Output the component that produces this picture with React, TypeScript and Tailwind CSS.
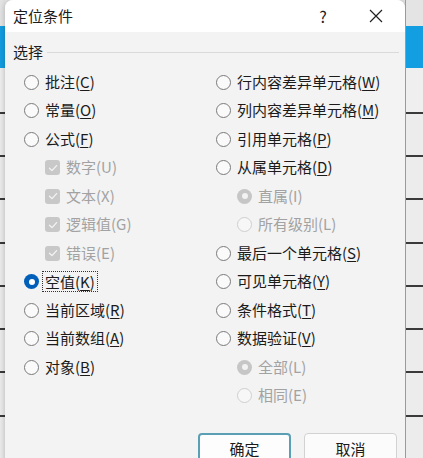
import React from 'react';

const font = { fontFamily: '"Noto Sans CJK SC", "Noto Sans", sans-serif' };

type Item = {
  label: string;
  key?: string;
  kind: 'radio' | 'check';
  checked?: boolean;
  disabled?: boolean;
  indent?: boolean;
  focus?: boolean;
};

const leftItems: Item[] = [
  { label: '批注', key: 'C', kind: 'radio' },
  { label: '常量', key: 'O', kind: 'radio' },
  { label: '公式', key: 'F', kind: 'radio' },
  { label: '数字(U)', kind: 'check', checked: true, disabled: true, indent: true },
  { label: '文本(X)', kind: 'check', checked: true, disabled: true, indent: true },
  { label: '逻辑值(G)', kind: 'check', checked: true, disabled: true, indent: true },
  { label: '错误(E)', kind: 'check', checked: true, disabled: true, indent: true },
  { label: '空值', key: 'K', kind: 'radio', checked: true, focus: true },
  { label: '当前区域', key: 'R', kind: 'radio' },
  { label: '当前数组', key: 'A', kind: 'radio' },
  { label: '对象', key: 'B', kind: 'radio' },
];

const rightItems: Item[] = [
  { label: '行内容差异单元格', key: 'W', kind: 'radio' },
  { label: '列内容差异单元格', key: 'M', kind: 'radio' },
  { label: '引用单元格', key: 'P', kind: 'radio' },
  { label: '从属单元格', key: 'D', kind: 'radio' },
  { label: '直属(I)', kind: 'radio', checked: true, disabled: true, indent: true },
  { label: '所有级别(L)', kind: 'radio', disabled: true, indent: true },
  { label: '最后一个单元格', key: 'S', kind: 'radio' },
  { label: '可见单元格', key: 'Y', kind: 'radio' },
  { label: '条件格式', key: 'T', kind: 'radio' },
  { label: '数据验证', key: 'V', kind: 'radio' },
  { label: '全部(L)', kind: 'radio', checked: true, disabled: true, indent: true },
  { label: '相同(E)', kind: 'radio', disabled: true, indent: true },
];

function Radio({ checked, disabled }: { checked?: boolean; disabled?: boolean }) {
  if (checked && !disabled) {
    return (
      <span className="w-[15px] h-[15px] rounded-full bg-[#005fb8] flex items-center justify-center shrink-0">
        <span className="w-[6px] h-[6px] rounded-full bg-white" />
      </span>
    );
  }
  if (checked && disabled) {
    return (
      <span className="w-[15px] h-[15px] rounded-full bg-[#c6c6c6] flex items-center justify-center shrink-0">
        <span className="w-[6px] h-[6px] rounded-full bg-[#f2f2f2]" />
      </span>
    );
  }
  return (
    <span
      className={`w-[15px] h-[15px] rounded-full border shrink-0 ${
        disabled ? 'border-[#cfcfcf] bg-[#f7f7f7]' : 'border-[#7a7a7a] bg-[#fafafa]'
      }`}
    />
  );
}

function Check() {
  return (
    <span className="w-[15px] h-[15px] rounded-[3px] bg-[#c8c8c8] flex items-center justify-center shrink-0">
      <svg width="10" height="10" viewBox="0 0 10 10" fill="none">
        <path d="M1.5 5.2 L4 7.6 L8.6 2.6" stroke="#f4f4f4" strokeWidth="1.3" strokeLinecap="round" strokeLinejoin="round" />
      </svg>
    </span>
  );
}

function Row({ item }: { item: Item }) {
  const text = (
    <span className={item.disabled ? 'text-[#a2a2a2]' : 'text-[#1b1b1b]'}>
      {item.label}
      {item.key && (
        <>
          (<span className="underline underline-offset-2">{item.key}</span>)
        </>
      )}
    </span>
  );
  return (
    <div className={`h-[28.5px] flex items-center gap-[6px] ${item.indent ? 'pl-[21px]' : ''}`}>
      {item.kind === 'radio' ? <Radio checked={item.checked} disabled={item.disabled} /> : <Check />}
      {item.focus ? (
        <span className="border border-dotted border-[#333] px-[2px] -ml-[3px] leading-[19px]">{text}</span>
      ) : (
        text
      )}
    </div>
  );
}

function Strip({ wide }: { wide?: boolean }) {
  const cells = [0, 1, 2, 3, 4, 5, 6, 7];
  return (
    <div className={`flex flex-col ${wide ? 'flex-1 border-l border-[#9a9a9a]' : 'w-[5px]'}`}>
      <div className="h-[27px] bg-[#e4e4e4]" />
      <div className="h-[45px] bg-[#139ee2]" />
      <div className="h-[46px] bg-[#efefef]" />
      {cells.map((c) => (
        <div key={c} className="h-[45.6px] bg-[#ececec] border-t-2 border-[#3a3a3a]" />
      ))}
    </div>
  );
}

export default function App() {
  return (
    <div className="w-[423px] h-[458px] overflow-hidden flex bg-[#e8e8e8] text-[15px]" style={font}>
      <Strip />
      <div className="w-[400px] h-[470px] flex flex-col rounded-tl-[8px] rounded-tr-[8px] bg-[#f3f3f3] shadow-[0_0_6px_rgba(0,0,0,0.25)] overflow-hidden">
        <div className="h-[32px] bg-white flex items-center pl-[8px] pr-[20px] text-[#1b1b1b]">
          <span className="flex-1">定位条件</span>
          <span className="w-[20px] text-center text-[16px] mr-[36px]">?</span>
          <svg width="14" height="14" viewBox="0 0 14 14" className="mr-[2px]">
            <path d="M1 1 L13 13 M13 1 L1 13" stroke="#222" strokeWidth="1.2" />
          </svg>
        </div>
        <div className="pl-[8px] pr-[6px] pt-[10px] flex items-center gap-[4px]">
          <span className="leading-[20px] text-[#1b1b1b]">选择</span>
          <span className="flex-1 h-px bg-[#dadada] mt-[1px]" />
        </div>
        <div className="flex pt-[5.75px] pl-[19px]">
          <div className="w-[192px] flex flex-col">
            {leftItems.map((it) => (
              <Row key={it.label} item={it} />
            ))}
          </div>
          <div className="flex-1 flex flex-col">
            {rightItems.map((it) => (
              <Row key={it.label} item={it} />
            ))}
          </div>
        </div>
        <div className="flex justify-end gap-[13px] pr-[8px] pt-[23px]">
          <button className="w-[93px] h-[32px] rounded-[4px] border-2 border-[#5b9fb5] bg-[#fdfdfd] text-[#1b1b1b]">
            确定
          </button>
          <button className="w-[93px] h-[32px] rounded-[4px] border border-[#d2d2d2] bg-[#fbfbfb] text-[#1b1b1b]">
            取消
          </button>
        </div>
      </div>
      <Strip wide />
    </div>
  );
}
